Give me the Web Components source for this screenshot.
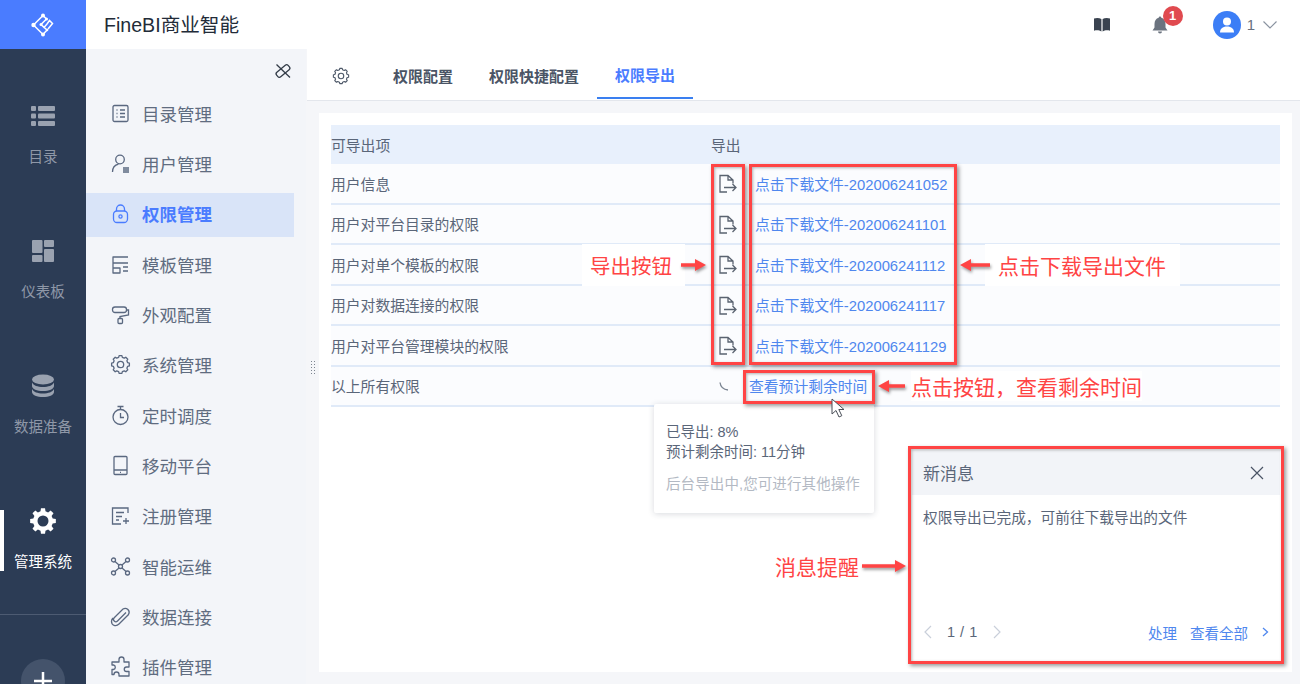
<!DOCTYPE html>
<html lang="zh">
<head>
<meta charset="utf-8">
<title>FineBI</title>
<style>
  html, body { margin: 0; height: 684px; overflow: hidden; background: #f5f6f9; }
  body { font-family: "Liberation Sans", "Noto Sans CJK SC", sans-serif; }
</style>
</head>
<body>
<bi-app>
  <bi-rail slot="rail"></bi-rail>
  <bi-topbar slot="top"></bi-topbar>
  <bi-menu slot="menu"></bi-menu>
  <bi-tabs slot="tabs"></bi-tabs>
  <bi-card slot="main">
    <bi-head></bi-head>
    <export-row link="点击下载文件-202006241052">用户信息</export-row>
    <export-row link="点击下载文件-202006241101">用户对平台目录的权限</export-row>
    <export-row link="点击下载文件-202006241112">用户对单个模板的权限</export-row>
    <export-row link="点击下载文件-202006241117">用户对数据连接的权限</export-row>
    <export-row link="点击下载文件-202006241129">用户对平台管理模块的权限</export-row>
    <export-row link="查看预计剩余时间" busy>以上所有权限</export-row>
  </bi-card>
  <bi-tip slot="over"></bi-tip>
  <bi-message slot="over"></bi-message>

  <bi-box slot="over" style="left:711px;top:164px;width:34px;height:201px"></bi-box>
  <bi-box slot="over" style="left:749px;top:164px;width:208px;height:201px"></bi-box>
  <bi-box slot="over" style="left:743px;top:370px;width:132px;height:34px"></bi-box>
  <bi-box slot="over" style="left:908px;top:446px;width:376px;height:218px"></bi-box>

  <bi-note slot="over" dir="right" len="25" style="left:582px;top:245px;width:124px;height:40px;--text:20.500px;--pad:6px 13px 6px 8px;--mar:0 -12px 0 0;--gap:8px">导出按钮</bi-note>
  <bi-note slot="over" dir="left" len="30" style="left:960px;top:243px;width:222px;height:44px;--pad:6px 14px 6px 13px;--mar:0 0 0 -13px;--gap:8px">点击下载导出文件</bi-note>
  <bi-note slot="over" dir="left" len="27" style="left:878px;top:370px;width:270px;height:32px;--gap:6px">点击按钮，查看剩余时间</bi-note>
  <bi-note slot="over" dir="right" len="44" style="left:775px;top:550px;width:131px;height:32px;--gap:3px">消息提醒</bi-note>
  <bi-cursor slot="over" style="left:831px;top:398px"></bi-cursor>
  <bi-grip slot="over" style="left:311px;top:361px"></bi-grip>
</bi-app>

<script>
// gear outline, used by the rail, the menu and the tab bar
function gearPath(cx, cy, outer, inner, teeth) {
  let d = '';
  const step = Math.PI * 2 / teeth;
  for (let i = 0; i < teeth; i++) {
    const a = i * step - Math.PI / 2;
    const pts = [[a - step * 0.2, outer], [a + step * 0.2, outer], [a + step * 0.32, inner], [a + step * 0.68, inner]];
    pts.forEach(([t, r], j) => {
      const x = (cx + Math.cos(t) * r).toFixed(2);
      const y = (cy + Math.sin(t) * r).toFixed(2);
      d += (i === 0 && j === 0 ? 'M' : 'L') + x + ' ' + y;
    });
  }
  return d + 'Z';
}

const menuIcons = {
  list: '<rect x="3" y="2.5" width="15" height="16" rx="1.5"/><path d="M6.5 7h1M10 7h5M6.5 10.5h1M10 10.5h5M6.5 14h1M10 14h5"/>',
  user: '<circle cx="10" cy="6.5" r="4.3"/><path d="M2.5 19c0-4.5 2.5-7 6-7.8M13 15h6M13 17h6M13 19h6"/>',
  lock: '<path d="M6.5 8V6a4 4 0 0 1 8 0v2"/><rect x="3.5" y="8" width="14" height="11.5" rx="3.5"/><circle cx="10.5" cy="13.5" r="1.6"/>',
  tpl: '<path d="M18 3H3v6h15M3 9v10h7v-5H3M13 9h5M13 13h5M13 17h5" stroke-linejoin="round"/>',
  paint: '<rect x="2.5" y="3" width="14" height="5.5" rx="2.5"/><path d="M16.5 6h2v5l-8.500 1.500v2"/><rect x="8" y="14.500" width="4.500" height="5" rx="1"/>',
  gear: `<path d="${gearPath(10.5, 10.5, 9, 7.4, 8)}" stroke-linejoin="round"/><circle cx="10.5" cy="10.5" r="3.200"/>`,
  timer: '<circle cx="10.500" cy="12" r="7.500"/><path d="M7.500 1.500h6M10.500 2v2.500M10.500 8v4.500h3.500"/>',
  phone: '<rect x="4" y="1.500" width="13" height="18" rx="1"/><path d="M4 15h13M10 17.300h1"/>',
  reg: '<path d="M18 8V3H2.500v16H11M6 7.500h8M6 11.500h6M6 15h3M13 16h6M16 13v6"/>',
  ops: '<circle cx="3.500" cy="4" r="2"/><circle cx="17.500" cy="4" r="2"/><circle cx="3.500" cy="17" r="2"/><circle cx="17.500" cy="17" r="2"/><circle cx="10.500" cy="10.500" r="2"/><path d="M5 5.500l4 3.500M16 5.500l-4 3.500M5 15.500l4-3.500M16 15.500l-4-3.500"/>',
  clip: '<path d="M16 6.500L7.500 15a2.300 2.300 0 0 1-3.300-3.300L13 3a4 4 0 0 1 5.500 5.500l-9.500 9.500c-3 3-7.500 1.500-7.500-2.500 0-1.500.5-2.500 1.500-3.500"/>',
  plugin: '<path d="M9 3.500a2.500 2.500 0 0 1 5 0V6h5v5h-2.500a2.200 2.200 0 0 0 0 4.500H19V20H9v-1.500a2.500 2.500 0 0 0-5 0H2v-5h1.500a2.300 2.300 0 0 0 0-4.500H2V6h7z" stroke-linejoin="round"/>'
};

class BiApp extends HTMLElement {
  constructor() {
    super();
    this.attachShadow({ mode: 'open' }).innerHTML = `
      <style>
        :host { display: grid; grid-template-columns: 86px 220px 1fr; grid-template-rows: 49px 52px 1fr; height: 684px; position: relative; overflow: hidden; color: #5a6679; }
        .rail { grid-row: 1 / 4; }
        .top { grid-column: 2 / 4; }
        .menu { grid-row: 2 / 4; display: block; }
        .tabs { grid-column: 3; margin-left: 1px; }
        .main { grid-column: 3; padding: 12px 8px 12px 13px; min-height: 0; }
      </style>
      <div class="rail"><slot name="rail"></slot></div>
      <div class="top"><slot name="top"></slot></div>
      <div class="menu"><slot name="menu"></slot></div>
      <div class="tabs"><slot name="tabs"></slot></div>
      <div class="main"><slot name="main"></slot></div>
      <slot name="over"></slot>`;
  }
}

class BiRail extends HTMLElement {
  constructor() {
    super();
    const fill = '#9aa2b0';
    const items = [
      ['目录', `<svg width="26" height="22" viewBox="0 0 26 22" fill="${fill}"><rect x="1" y="1" width="5" height="5" rx="1"/><rect x="8" y="1" width="17" height="5" rx="1"/><rect x="1" y="8.500" width="5" height="5" rx="1"/><rect x="8" y="8.500" width="17" height="5" rx="1"/><rect x="1" y="16" width="5" height="5" rx="1"/><rect x="8" y="16" width="17" height="5" rx="1"/></svg>`],
      ['仪表板', `<svg width="24" height="24" viewBox="0 0 24 24" fill="${fill}"><rect x="1" y="1" width="10.500" height="13" rx="1"/><rect x="13" y="1" width="10" height="7" rx="1"/><rect x="1" y="16" width="10.500" height="7" rx="1"/><rect x="13" y="10" width="10" height="13" rx="1"/></svg>`],
      ['数据准备', `<svg width="24" height="24" viewBox="0 0 24 24" fill="${fill}"><ellipse cx="12" cy="5.500" rx="11" ry="5"/><path d="M1 8.500c1.500 3 5.500 4.500 11 4.500s9.500-1.500 11-4.500V12c0 3-5 5-11 5S1 15 1 12zM1 15c1.500 3 5.500 4.500 11 4.500S21.500 18 23 15v3c0 3-5 5-11 5S1 21 1 18z"/></svg>`],
      ['管理系统', `<svg width="28" height="28" viewBox="0 0 28 28"><path fill="#fff" fill-rule="evenodd" d="${gearPath(14, 14, 13, 10, 8)}M14 8.500a5.500 5.500 0 1 0 0 11a5.500 5.500 0 1 0 0-11z"/></svg>`]
    ];
    this.attachShadow({ mode: 'open' }).innerHTML = `
      <style>
        :host { display: block; height: 684px; background: #2c3c55; overflow: hidden; }
        .logo { height: 49px; background: #4a7cff; display: flex; align-items: center; justify-content: center; }
        nav { display: flex; flex-direction: column; gap: 28px; padding-top: 53px; border-bottom: 1px solid #4d5b72; }
        .item { height: 107px; position: relative; color: #8f98a8; font-size: 14.500px; text-align: center; }
        .item .ic { height: 28px; display: flex; align-items: center; justify-content: center; }
        .item .tx { margin-top: 17px; height: 20px; line-height: 20px; white-space: nowrap; }
        .item.on { color: #fff; }
        .item.on::before { content: ''; position: absolute; left: 0; top: 3px; width: 4px; height: 61px; background: #fff; }
        .plus { width: 44px; height: 44px; margin: 44px auto 0; border-radius: 50%; background: #44536b; display: flex; align-items: center; justify-content: center; }
      </style>
      <div class="logo">
        <svg width="24" height="24" viewBox="0 0 24 24" fill="none" stroke="#fff" stroke-width="1.500">
          <path d="M12 2.500L2.500 12 12 21.500l4-4.500-6-5.500L15.500 6 12 2.500M10 11.500l3 3 3-3.500 2.500-3.500 3 3-4.500 5.500"/>
          <g fill="#fff" stroke="none"><circle cx="12" cy="2.500" r="2"/><circle cx="2.500" cy="12" r="2.200"/><circle cx="12" cy="21.500" r="2"/><circle cx="10" cy="11.500" r="1.500"/><circle cx="15.500" cy="6" r="1.500"/><circle cx="16" cy="17" r="1.300"/></g>
        </svg>
      </div>
      <nav>${items.map(([t, svg], i) => `<div class="item${i === 3 ? ' on' : ''}"><div class="ic">${svg}</div><div class="tx">${t}</div></div>`).join('')}</nav>
      <div class="plus"><svg width="18" height="18" viewBox="0 0 18 18"><path d="M9 0v18M0 9h18" stroke="#fff" stroke-width="2.500"/></svg></div>`;
  }
}

class BiTopbar extends HTMLElement {
  constructor() {
    super();
    this.attachShadow({ mode: 'open' }).innerHTML = `
      <style>
        :host { display: flex; align-items: center; height: 49px; background: #fff; padding-left: 18px; color: #222b38; font-size: 19.600px; }
        .title { flex: 1; position: relative; top: -1px; }
        .tools { display: flex; align-items: center; height: 49px; }
        .book { margin-right: 41px; }
        .bell { position: relative; margin-right: 45px; height: 18px; }
        .badge { position: absolute; left: 11px; top: -10px; width: 20px; height: 20px; border-radius: 50%; background: #e04a4f; color: #fff; font-size: 13px; font-weight: bold; line-height: 20px; text-align: center; }
        .avatar { width: 28px; height: 28px; border-radius: 50%; background: #3c7ef6; display: flex; align-items: center; justify-content: center; }
        .name { margin-left: 6px; font-size: 15px; color: #68717f; }
        .chev { margin: 0 23px 0 8px; }
      </style>
      <span class="title">FineBI商业智能</span>
      <div class="tools">
        <svg class="book" width="18" height="15" viewBox="0 0 18 15"><path fill="#3a4350" d="M1 1.500C3.500.5 6.500.8 8.400 2v12.500C6.500 13.300 3.500 13 1 13.800zM17 1.500C14.500.5 11.500.8 9.600 2v12.500c1.900-1.200 4.900-1.500 7.400-.7z"/></svg>
        <div class="bell">
          <svg width="16" height="18" viewBox="0 0 16 18"><path fill="#6b737f" d="M8 0.500c.8 0 1.300.6 1.300 1.300C12 2.500 13.500 5 13.500 8v3.500L15.500 14.500H.5L2.500 11.500V8C2.500 5 4 2.500 6.700 1.800 6.700 1.100 7.200.5 8 .5zM6 15.500h4a2 2 0 0 1-4 0z"/></svg>
          <span class="badge">1</span>
        </div>
        <div class="avatar"><svg width="16" height="16" viewBox="0 0 16 16" fill="#fff"><circle cx="8" cy="4.500" r="4"/><path d="M1 15.500c0-3.500 2.500-6 7-6s7 2.500 7 6z"/></svg></div>
        <span class="name">1</span>
        <svg class="chev" width="14" height="8" viewBox="0 0 14 8" fill="none" stroke="#8a93a0" stroke-width="1.200"><path d="M.5.500L7 7 13.500.5"/></svg>
      </div>`;
  }
}

class BiMenu extends HTMLElement {
  constructor() {
    super();
    const rows = [['list', '目录管理'], ['user', '用户管理'], ['lock', '权限管理'], ['tpl', '模板管理'], ['paint', '外观配置'], ['gear', '系统管理'], ['timer', '定时调度'], ['phone', '移动平台'], ['reg', '注册管理'], ['ops', '智能运维'], ['clip', '数据连接'], ['plugin', '插件管理']];
    this.attachShadow({ mode: 'open' }).innerHTML = `
      <style>
        :host { display: block; height: 635px; background: #f3f5f9; overflow: hidden; }
        .pin { height: 43px; display: flex; justify-content: flex-end; align-items: flex-start; padding: 13px 14px 0 0; box-sizing: border-box; }
        ul { list-style: none; margin: 0; padding: 0 12px 0 0; display: flex; flex-direction: column; gap: 6.350px; }
        li { height: 44px; box-sizing: border-box; padding: 0 0 2px 24px; display: flex; align-items: center; font-size: 17.500px; color: #5f6c80; }
        li svg { width: 21px; height: 21px; margin-right: 11px; fill: none; stroke: currentColor; stroke-width: 1.300; color: #5a6880; flex: none; }
        li.on { background: #d9e4f8; color: #4a7cff; font-weight: bold; }
        li.on svg { color: #4a7cff; }
      </style>
      <div class="pin"><svg width="18" height="18" viewBox="0 0 18 18" fill="none" stroke="#333c48" stroke-width="1.300"><rect x="1.500" y="6" width="15" height="6" rx="2" transform="rotate(-40 9 9)"/><path d="M2.500 2.500L16 15.500"/></svg></div>
      <ul>${rows.map(([ic, t]) => `<li class="${ic === 'lock' ? 'on' : ''}"><svg viewBox="0 0 21 21">${menuIcons[ic]}</svg>${t}</li>`).join('')}</ul>`;
  }
}

class BiTabs extends HTMLElement {
  constructor() {
    super();
    this.attachShadow({ mode: 'open' }).innerHTML = `
      <style>
        :host { display: flex; align-items: stretch; height: 52px; box-sizing: border-box; background: #fff; border-bottom: 1.500px solid #e3e6ec; padding-left: 25px; font-size: 15px; font-weight: bold; color: #4a5465; }
        svg { align-self: center; width: 18px; height: 18px; fill: none; stroke: #4d5868; stroke-width: 1.300; margin-right: 25px; position: relative; top: 1px; }
        .tab { padding: 0 18px; display: flex; align-items: center; position: relative; top: 1px; height: 49px; box-sizing: border-box; padding-top: 2px; }
        .on { color: #4a7cff; border-bottom: 2px solid #3a7ff0; }
      </style>
      <svg viewBox="0 0 21 21">${menuIcons.gear}</svg>
      <div class="tab">权限配置</div><div class="tab">权限快捷配置</div><div class="tab on">权限导出</div>`;
  }
}

class BiCard extends HTMLElement {
  constructor() {
    super();
    this.attachShadow({ mode: 'open' }).innerHTML = `
      <style>:host { display: block; height: 559px; background: #fff; padding: 12px; box-sizing: border-box; }</style>
      <slot></slot>`;
  }
}

class BiHead extends HTMLElement {
  constructor() {
    super();
    this.attachShadow({ mode: 'open' }).innerHTML = `
      <style>
        :host { display: grid; grid-template-columns: 380px 1fr; align-items: center; height: 39px; background: #e8f0fc; font-size: 14.800px; color: #5a6679; }
      </style>
      <span>可导出项</span><span>导出</span>`;
  }
}

class ExportRow extends HTMLElement {
  constructor() {
    super();
    const busy = this.hasAttribute('busy');
    const icon = busy
      ? '<svg class="spin" width="12" height="12" viewBox="0 0 12 12" fill="none" stroke="#7b8592" stroke-width="1.300"><path d="M1 1.500c.5 4 3.500 7 8 7.500"/></svg>'
      : '<svg width="20" height="20" viewBox="0 0 20 20" fill="none" stroke="#5a6370" stroke-width="1.300"><path d="M10 18H3V1.500h8l5 4.500v3.500M11 1.500V6h5"/><path d="M7 13.500h12M15.500 10l3.500 3.500-3.500 3.500"/></svg>';
    this.attachShadow({ mode: 'open' }).innerHTML = `
      <style>
        :host { display: grid; grid-template-columns: 380px ${busy ? '38px' : '44px'} 1fr; align-items: center; height: 40.500px; box-sizing: border-box; background: #fbfcfe; border-bottom: 2px solid #e0eaf8; font-size: 14.800px; color: #5a6679; }
        .ic { display: flex; padding-left: ${busy ? '8px' : '6px'}; }
        .ic svg { position: relative; top: 1px; }
        a { color: #4f87ee; white-space: nowrap; }
      </style>
      <span><slot></slot></span>
      <span class="ic">${icon}</span>
      <a>${this.getAttribute('link')}</a>`;
  }
}

class BiTip extends HTMLElement {
  constructor() {
    super();
    this.attachShadow({ mode: 'open' }).innerHTML = `
      <style>
        :host { position: absolute; left: 654px; top: 404px; width: 220px; height: 109px; box-sizing: border-box; padding: 18px 12px 0; background: #fff; border-radius: 2px; box-shadow: 0 1px 6px rgba(40, 50, 70, .18); font-size: 14.500px; line-height: 20px; color: #5a6679; white-space: nowrap; }
        .hint { margin-top: 12px; color: #b3b9c3; letter-spacing: .1px; }
      </style>
      <div>已导出: 8%</div>
      <div>预计剩余时间: 11分钟</div>
      <div class="hint">后台导出中,您可进行其他操作</div>`;
  }
}

class BiMessage extends HTMLElement {
  constructor() {
    super();
    this.attachShadow({ mode: 'open' }).innerHTML = `
      <style>
        :host { position: absolute; left: 912px; top: 450px; width: 368px; height: 210px; display: flex; flex-direction: column; background: #fff; color: #5a6679; font-size: 14.500px; }
        header { height: 45px; flex: none; display: flex; align-items: center; justify-content: space-between; padding: 0 16px 0 11px; background: #f2f4f8; font-size: 17px; }
        .body { flex: 1; padding: 13px 11px; font-size: 14.700px; line-height: 20px; }
        footer { height: 38px; flex: none; display: flex; align-items: center; padding: 0 11px 18px; box-sizing: border-box; font-size: 14.500px; }
        .count { margin: 0 16px 0 15px; color: #5a6679; font-size: 14.500px; word-spacing: 1px; }
        .links { margin-left: auto; display: flex; align-items: center; gap: 13px; color: #4f87ee; }
        .more { margin-left: 1px; }
      </style>
      <header>
        <span>新消息</span>
        <svg width="14" height="14" viewBox="0 0 14 14" stroke="#4a5465" stroke-width="1.200"><path d="M1 1l12 12M13 1L1 13"/></svg>
      </header>
      <div class="body">权限导出已完成，可前往下载导出的文件</div>
      <footer>
        <svg width="9" height="14" viewBox="0 0 9 14" fill="none" stroke="#c9cfda" stroke-width="1.200"><path d="M8 1L2 7l6 6"/></svg>
        <span class="count">1 / 1</span>
        <svg width="9" height="14" viewBox="0 0 9 14" fill="none" stroke="#c9cfda" stroke-width="1.200"><path d="M1 1l6 6-6 6"/></svg>
        <div class="links"><span>处理</span><span>查看全部</span>
          <svg class="more" width="7" height="10" viewBox="0 0 7 10" fill="none" stroke="#4f87ee" stroke-width="1.300"><path d="M1 1l4.500 4L1 9"/></svg>
        </div>
      </footer>`;
  }
}

class BiBox extends HTMLElement {
  constructor() {
    super();
    this.attachShadow({ mode: 'open' }).innerHTML = `
      <style>
        :host { position: absolute; box-sizing: border-box; border: 3.500px solid #ff4444; box-shadow: 2px 2px 4px rgba(0, 0, 0, .4), inset 1px 1px 3px rgba(0, 0, 0, .3); }
      </style>`;
  }
}

class BiNote extends HTMLElement {
  constructor() {
    super();
    const right = this.getAttribute('dir') === 'right';
    const len = Number(this.getAttribute('len'));
    const arrow = right
      ? `<svg width="${len}" height="14" viewBox="0 0 ${len} 14"><path fill="#ff4444" d="M0 5.300h${len - 11}V1l11 6-11 6V8.700H0z"/></svg>`
      : `<svg width="${len}" height="14" viewBox="0 0 ${len} 14"><path fill="#ff4444" d="M${len} 5.300H11V1L0 7l11 6V8.700h${len - 11}z"/></svg>`;
    this.attachShadow({ mode: 'open' }).innerHTML = `
      <style>
        :host { position: absolute; display: flex; align-items: center; gap: var(--gap, 8px); box-sizing: border-box; color: #ff4444; font-size: var(--text, 21px); white-space: nowrap; flex-direction: ${right ? 'row' : 'row-reverse'}; justify-content: flex-end; }
        .label { padding: var(--pad, 0); margin: var(--mar, 0); background: #fff; }
        svg { flex: none; filter: drop-shadow(1px 2px 1.500px rgba(0, 0, 0, .4)); position: relative; z-index: 1; }
      </style>
      <span class="label"><slot></slot></span>${arrow}`;
  }
}

class BiCursor extends HTMLElement {
  constructor() {
    super();
    this.attachShadow({ mode: 'open' }).innerHTML = `
      <style>:host { position: absolute; display: block; width: 16px; height: 21px; }</style>
      <svg width="16" height="21" viewBox="0 0 16 21"><path fill="#fff" stroke="#4a4f58" stroke-width="1" d="M1 1v15l4-3.500 3 6.500 2.800-1.300-3-6.200H13z"/></svg>`;
  }
}

class BiGrip extends HTMLElement {
  constructor() {
    super();
    this.attachShadow({ mode: 'open' }).innerHTML = `
      <style>
        :host { position: absolute; display: grid; grid-template-columns: 1px 1px; gap: 2px 2px; }
        i { width: 1px; height: 1px; background: #7d8590; }
      </style>
      ${'<i></i>'.repeat(10)}`;
  }
}

customElements.define('bi-app', BiApp);
customElements.define('bi-rail', BiRail);
customElements.define('bi-topbar', BiTopbar);
customElements.define('bi-menu', BiMenu);
customElements.define('bi-tabs', BiTabs);
customElements.define('bi-card', BiCard);
customElements.define('bi-head', BiHead);
customElements.define('export-row', ExportRow);
customElements.define('bi-tip', BiTip);
customElements.define('bi-message', BiMessage);
customElements.define('bi-box', BiBox);
customElements.define('bi-note', BiNote);
customElements.define('bi-cursor', BiCursor);
customElements.define('bi-grip', BiGrip);
</script>
</body>
</html>
